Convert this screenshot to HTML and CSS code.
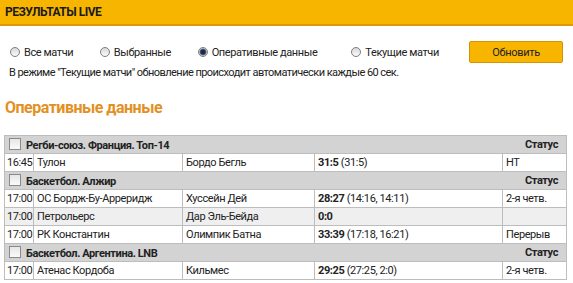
FILE: index.html
```html
<!DOCTYPE html>
<html lang="ru">
<head>
    <meta charset="UTF-8">
    <title>Результаты Live</title>
    <link rel="stylesheet" href="styles.css">
</head>
<body>
    <div class="page-header">РЕЗУЛЬТАТЫ LIVE</div>

    <div class="filters">
        <div class="filter-row">
            <label class="radio r1"><input type="radio" name="mode"> Все матчи</label>
            <label class="radio r2"><input type="radio" name="mode"> Выбранные</label>
            <label class="radio r3"><input type="radio" name="mode" checked> Оперативные данные</label>
            <label class="radio r4"><input type="radio" name="mode"> Текущие матчи</label>
            <button class="refresh-btn">Обновить</button>
        </div>
        <div class="note">В режиме "Текущие матчи" обновление происходит автоматически каждые 60 сек.</div>
    </div>

    <h2 class="section-title">Оперативные данные</h2>

    <table class="results">
        <colgroup>
            <col class="c-time">
            <col class="c-home">
            <col class="c-away">
            <col class="c-score">
            <col class="c-status">
        </colgroup>
        <tr class="league">
            <td colspan="4"><span class="box"></span>Регби-союз. Франция. Топ-14</td>
            <td class="status-head">Статус</td>
        </tr>
        <tr>
            <td>16:45</td><td>Тулон</td><td>Бордо Бегль</td>
            <td><b>31:5</b> (31:5)</td><td>HT</td>
        </tr>
        <tr class="league">
            <td colspan="4"><span class="box"></span>Баскетбол. Алжир</td>
            <td class="status-head">Статус</td>
        </tr>
        <tr>
            <td>17:00</td><td>ОС Бордж-Бу-Арреридж</td><td>Хуссейн Дей</td>
            <td><b>28:27</b> (14:16, 14:11)</td><td>2-я четв.</td>
        </tr>
        <tr class="shade">
            <td>17:00</td><td>Петрольерс</td><td>Дар Эль-Бейда</td>
            <td><b>0:0</b></td><td></td>
        </tr>
        <tr>
            <td>17:00</td><td>РК Константин</td><td>Олимпик Батна</td>
            <td><b>33:39</b> (17:18, 16:21)</td><td>Перерыв</td>
        </tr>
        <tr class="league">
            <td colspan="4"><span class="box"></span>Баскетбол. Аргентина. LNB</td>
            <td class="status-head">Статус</td>
        </tr>
        <tr>
            <td>17:00</td><td>Атенас Кордоба</td><td>Кильмес</td>
            <td><b>29:25</b> (27:25, 2:0)</td><td>2-я четв.</td>
        </tr>
    </table>
</body>
</html>
```

FILE: styles.css
```css
body {
    margin: 0;
    font-family: Roboto, "Liberation Sans", sans-serif;
    font-size: 11px;
    color: #222;
    background: #fff;
    letter-spacing: -0.4px;
}

.page-header {
    height: 24px;
    line-height: 25px;
    padding-left: 5px;
    background-color: #f7b500;
    border-bottom: 2px solid #e09a00;
    font-weight: bold;
    font-size: 12px;
    color: #1a1a1a;
    letter-spacing: -0.5px;
}

.filters {
    padding: 15px 10px 0 10px;
}

.filter-row {
    display: flex;
    align-items: center;
    height: 22px;
}

.radio {
    display: flex;
    align-items: center;
}

/* Custom radio: grey bevel, dark dot when chosen */
.radio input {
    appearance: none;
    margin: 0 4px 0 0;
    width: 10px;
    height: 10px;
    border: 1px solid #7d7d7d;
    border-radius: 50%;
    background: linear-gradient(#d8d8d8, #fafafa);
}

.radio input:checked {
    background: radial-gradient(circle, #1c2a44 0, #1c2a44 2px, #5a6b8a 3px, #e8e8e8 4px);
}

.r1 { width: 90px; }
.r2 { width: 98px; }
.r3 { width: 154px; }
.r4 { width: 118px; }

.refresh-btn {
    width: 94px;
    height: 22px;
    background-color: #f7b500;
    border: 1px solid #d39500;
    border-radius: 2px;
    font-family: inherit;
    font-size: 11px;
    letter-spacing: -0.3px;
    color: #222;
    cursor: pointer;
}

.note {
    margin-top: 3px;
    margin-left: -1px;
    letter-spacing: -0.55px;
}

.section-title {
    margin: 19px 0 0 5px;
    font-size: 16px;
    font-weight: bold;
    color: #e3901f;
    letter-spacing: -0.5px;
}

.results {
    margin: 18px 0 0 4px;
    width: 562px;
    border-collapse: collapse;
    table-layout: fixed;
}

.c-time { width: 29px; }
.c-home { width: 149px; }
.c-away { width: 132px; }
.c-score { width: 188px; }
.c-status { width: 64px; }

.results td {
    height: 17px;
    padding: 0 3px;
    border: 1px solid #bdbdbd;
    white-space: nowrap;
    overflow: hidden;
}

.results td:first-child {
    padding: 0 2px;
}

.results tr.league td {
    background-color: #d3d3d3;
    font-weight: bold;
    border-left: none;
    border-right: none;
}

.results tr.league td:first-child {
    border-left: 1px solid #bdbdbd;
}

.results tr.league td:last-child {
    border-right: 1px solid #bdbdbd;
}

.results tr.shade td {
    background-color: #efefef;
}

.results .status-head {
    text-align: right;
    padding-right: 8px;
}

.box {
    display: inline-block;
    width: 10px;
    height: 10px;
    margin: 0 5px -1px 2px;
    background: linear-gradient(#e6e6e6, #fafafa);
    border: 1px solid #8a8a8a;
}
```
